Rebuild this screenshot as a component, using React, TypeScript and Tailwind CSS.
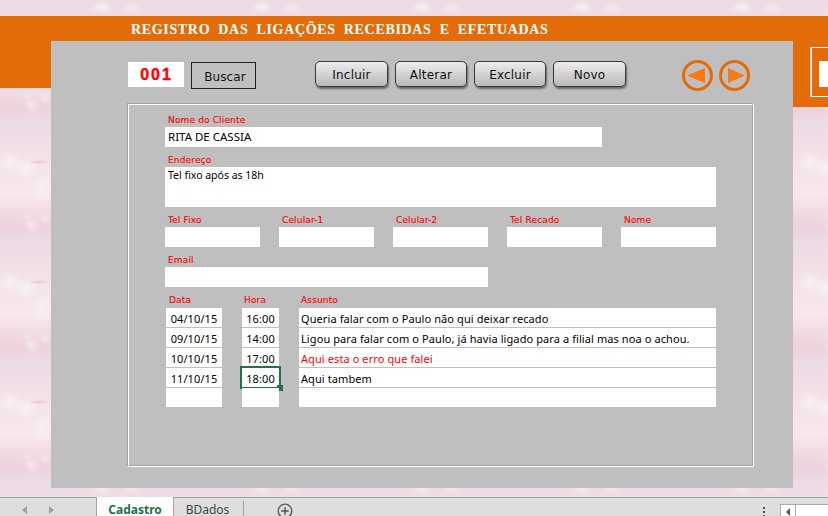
const sans = "font-['Noto_Sans','Open_Sans',sans-serif]";
const label = "font-['DejaVu_Sans',sans-serif] text-[9px] leading-[20px] text-[#ff0000] tracking-[0.15px] [-webkit-text-stroke:0.12px_#ff0000] pl-[3px] pt-[3px]";

function Label({ children }: { children: string }) {
  return <div className={`${label} h-5`}>{children}</div>;
}

function TopButton({ children, w }: { children: string; w: string }) {
  return (
    <button className={`${w} h-[26px] pt-[1px] rounded-[5px] border border-[#3a3a3a] bg-gradient-to-b from-[#ededed] to-[#b9b9b9] shadow-[1px_2px_2px_rgba(0,0,0,0.45)] text-[12px] leading-none text-[#111] tracking-[0.2px] font-['DejaVu_Sans',sans-serif]`}>
      {children}
    </button>
  );
}

function Arrow({ dir }: { dir: "left" | "right" }) {
  return (
    <svg width="31" height="31" viewBox="0 0 31 31" className="block">
      <circle cx="15.5" cy="15.5" r="14" fill="none" stroke="#e36c09" strokeWidth="3" />
      {dir === "left" ? (
        <path d="M5 15.5 L23 8 V23 Z" fill="#f97a12" />
      ) : (
        <path d="M26 15.5 L9 8 V23 Z" fill="#f97a12" />
      )}
    </svg>
  );
}

const rows = [
  { d: "04/10/15", h: "16:00", a: "Queria falar com o Paulo não qui deixar recado" },
  { d: "09/10/15", h: "14:00", a: "Ligou para falar com o Paulo, já havia ligado para a filial mas noa o achou." },
  { d: "10/10/15", h: "17:00", a: "Aqui esta o erro que falei", red: true },
  { d: "11/10/15", h: "18:00", a: "Aqui tambem", sel: true },
  { d: "", h: "", a: "" },
];

const bg =
  "bg-[#f2dbe2] bg-[length:160px_120px] bg-[radial-gradient(ellipse_9px_8px_at_32px_106px,#f5eaee_0,transparent_100%),radial-gradient(ellipse_7px_6px_at_28px_96px,#f1e2e7_0,transparent_100%),radial-gradient(ellipse_7px_6px_at_45px_98px,#f3e8ec_0,transparent_100%),radial-gradient(ellipse_12px_12px_at_10px_42px,#f8f1f4_0,transparent_100%),radial-gradient(ellipse_13px_11px_at_26px_48px,#f9f3f5_0,transparent_100%),radial-gradient(ellipse_11px_14px_at_42px_68px,#f7f0f3_0,transparent_100%),radial-gradient(ellipse_13px_2px_at_38px_42px,#e8c3cf_0,transparent_100%),radial-gradient(ellipse_11px_7px_at_102px_7px,#f8eef2_0,transparent_100%),radial-gradient(ellipse_10px_7px_at_132px_8px,#f6e8ee_0,transparent_100%),linear-gradient(180deg,#ebdbe5_0%,#f2e0e7_25%,#f8e8ed_62%,#edd0db_90%,#ebdbe5_100%)]";

export default function App() {
  return (
    <div className="w-[828px] h-[516px] overflow-hidden flex flex-col bg-white">
      <div className={`h-[497px] pt-4 flex items-start ${bg}`}>
        <div className="w-[51px] h-[72px] bg-[#e36c09] shrink-0" />
        <div className="w-[742px] shrink-0">
          <div className="h-[25px] bg-[#e36c09] pl-[80px] text-white font-['Liberation_Serif',serif] font-bold text-[14px] leading-[27px] tracking-[0.66px] [word-spacing:4px] whitespace-nowrap">
            REGISTRO DAS LIGAÇÕES RECEBIDAS E EFETUADAS
          </div>
          <div className="h-[447px] bg-[#bfbfbf] pl-[76px] pt-5">
            <div className="flex items-start h-7">
              <div className="w-[56px] h-[25px] mt-[1px] ml-[1px] pl-[1px] bg-white text-center text-[#ff0000] font-['Liberation_Sans',sans-serif] font-bold text-[16px] leading-[25px] tracking-[2px] [-webkit-text-stroke:0.4px_#ff0000]">
                001
              </div>
              <button className="w-[65px] h-[27px] mt-[1px] ml-[7px] border border-[#222] bg-[#c0c0c0] text-[12px] pt-[2px] pl-[3px] text-[#111] tracking-[0.1px] font-['DejaVu_Sans',sans-serif]">
                Buscar
              </button>
              <div className="flex ml-[59px] gap-[7px]">
                <TopButton w="w-[73px]">Incluir</TopButton>
                <TopButton w="w-[72px]">Alterar</TopButton>
                <TopButton w="w-[72px]">Excluir</TopButton>
                <TopButton w="w-[73px]">Novo</TopButton>
              </div>
              <div className="flex ml-[56px] -mt-[1px] gap-[6px]">
                <Arrow dir="left" />
                <Arrow dir="right" />
              </div>
            </div>
            <div className="mt-[14px] w-[627px] h-[364px] border border-t-[#a2a2a2] border-l-[#a2a2a2] border-r-white border-b-white">
              <div className="h-full border border-t-white border-l-white border-r-[#a2a2a2] border-b-[#a2a2a2] pl-9 pt-[2px]">
                <div className="w-[551px] grid grid-cols-5 gap-x-[19px]">
                  <div className="col-span-5"><Label>Nome do Cliente</Label></div>
                  <div className={`col-span-4 h-5 bg-white pl-[3px] text-[11.5px] leading-[19px] text-black ${sans}`}>RITA DE CASSIA</div>
                  <div className="col-span-5"><Label>Endereço</Label></div>
                  <div className={`col-span-5 h-10 bg-white pl-[3px] text-[10.5px] leading-[16px] text-black ${sans}`}>Tel fixo após as 18h</div>
                  {["Tel Fixo", "Celular-1", "Celular-2", "Tel Recado", "Nome"].map((t) => (
                    <Label key={t}>{t}</Label>
                  ))}
                  {[0, 1, 2, 3, 4].map((i) => (
                    <div key={i} className="h-5 bg-white" />
                  ))}
                  <div className="col-span-5"><Label>Email</Label></div>
                  <div className="col-span-3 h-5 bg-white" />
                </div>
                <div className="flex h-5 w-[551px] pl-[1px]">
                  <div className="w-[75px]"><Label>Data</Label></div>
                  <div className="w-[57px]"><Label>Hora</Label></div>
                  <div><Label>Assunto</Label></div>
                </div>
                <div className={`mt-[1px] w-[551px] pl-[1px] text-[11px] tracking-[0.09px] text-black ${sans}`}>
                  {rows.map((r, i) => (
                    <div key={i} className="flex h-5">
                      <div className="w-[56px] h-5 bg-white border-b border-[#bfbfbf] text-center leading-[21px]">{r.d}</div>
                      <div className="relative w-[37px] ml-5 h-5 bg-white border-b border-[#bfbfbf] text-center leading-[21px]">
                        {r.h}
                        {r.sel && (
                          <div className="absolute -left-[2px] -top-[2px] w-[41px] h-[23px] border-2 border-[#217346]">
                            <div className="absolute -right-[4px] -bottom-[4px] w-[6px] h-[6px] bg-[#217346]" />
                          </div>
                        )}
                      </div>
                      <div className={`ml-5 w-[417px] h-5 bg-white border-b border-[#bfbfbf] pl-[2px] leading-[21px] whitespace-nowrap ${r.red ? "text-[#ff0000]" : ""}`}>
                        {r.a}
                      </div>
                    </div>
                  ))}
                </div>
              </div>
            </div>
          </div>
        </div>
        <div className="w-[35px] h-[91px] bg-[#e36c09] shrink-0 pt-[31px] pl-[18px]">
          <div className="w-[17px] h-[50px] border border-r-0 border-white pl-[7px] pt-[13px] shadow-[-1px_0_0_#c9c9c9]">
            <div className="w-[9px] h-[26px] bg-white" />
          </div>
        </div>
      </div>
      <div className={`h-[19px] bg-[#dedede] border-t border-[#a3a3a3] flex items-start text-[12px] ${sans}`}>
        <div className="w-[96px] h-full flex items-center pl-[22px] gap-[22px] pt-[5px]">
          <span className="w-0 h-0 border-y-[4px] border-y-transparent border-r-[5px] border-r-[#a0a0a0]" />
          <span className="w-0 h-0 border-y-[4px] border-y-transparent border-l-[5px] border-l-[#a0a0a0]" />
        </div>
        <div className="w-[78px] h-[19px] -mt-[1px] pt-[7px] bg-white border-x border-[#a3a3a3] text-center text-[#217346] font-bold leading-[12px] text-[12px]">Cadastro</div>
        <div className="w-[70px] h-[15px] mt-[3px] pt-[3px] border-r border-[#a3a3a3] text-center text-[#444] leading-[12px] pr-[2px]">BDados</div>
        <svg width="16" height="16" viewBox="0 0 16 16" className="ml-[33px] mt-[5px] shrink-0">
          <circle cx="8" cy="8" r="6.8" fill="none" stroke="#555" strokeWidth="1.3" />
          <path d="M8 4.2V11.8M4.2 8H11.8" stroke="#555" strokeWidth="1.4" />
        </svg>
        <div className="ml-auto flex items-start">
          <div className="flex flex-col gap-[2px] mt-[9px] mr-[15px]">
            <span className="w-[2px] h-[2px] bg-[#555]" />
            <span className="w-[2px] h-[2px] bg-[#555]" />
            <span className="w-[2px] h-[2px] bg-[#555]" />
          </div>
          <div className="flex h-[12px] mt-[6px] border-t border-l border-[#aaa] bg-white">
            <div className="w-[15px] border-r border-[#aaa] flex items-center justify-center pt-[3px]">
              <span className="w-0 h-0 border-y-[4px] border-y-transparent border-r-[4px] border-r-[#555]" />
            </div>
            <div className="w-[32px]" />
          </div>
        </div>
      </div>
    </div>
  );
}
